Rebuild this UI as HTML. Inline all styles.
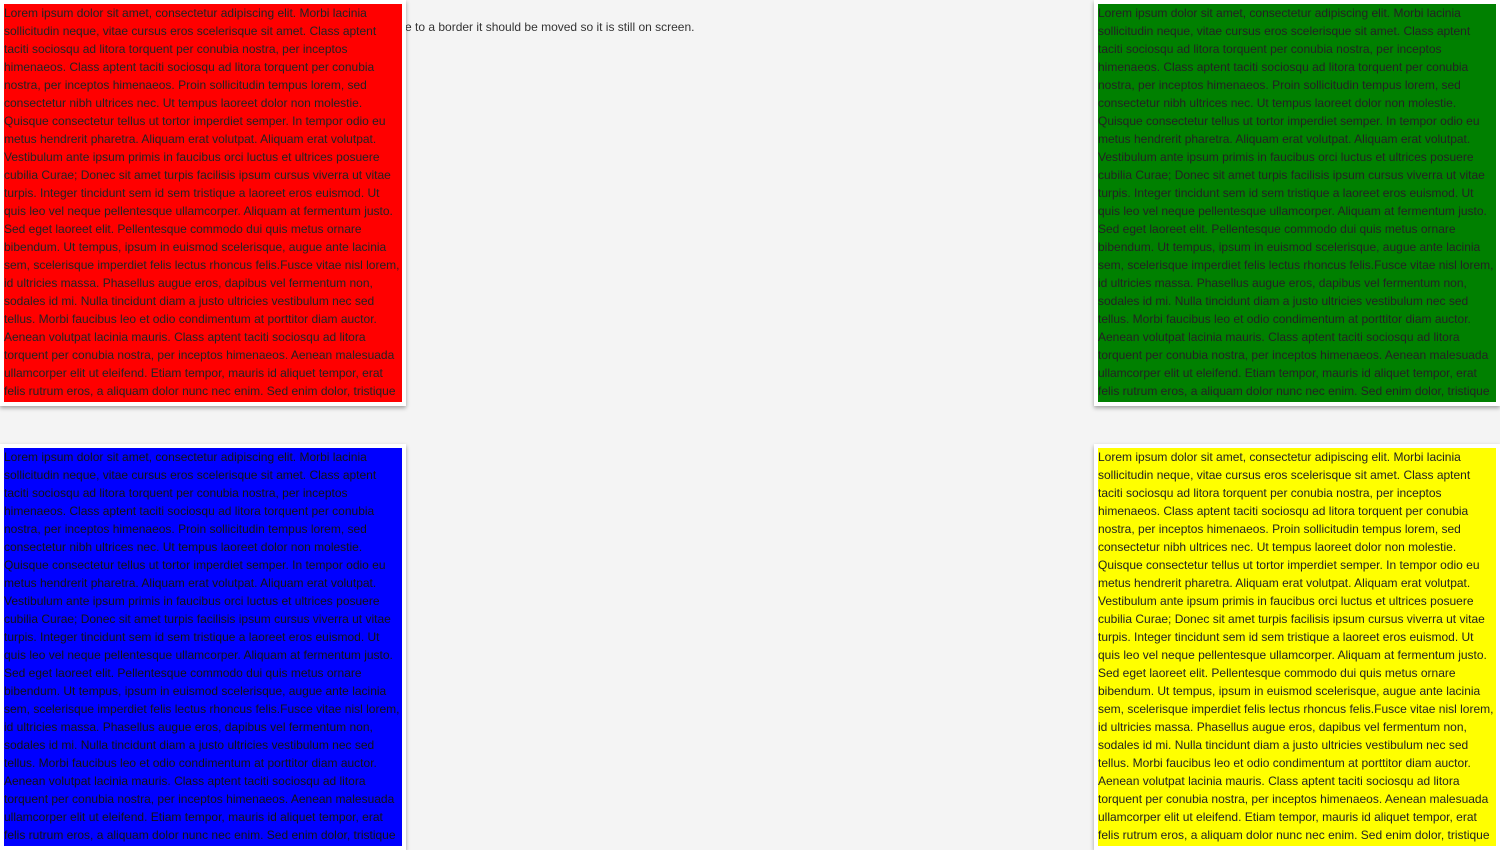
<!DOCTYPE html>
<html><head><meta charset="utf-8"><style>
html,body{margin:0;padding:0;background:#f4f4f4;width:1500px;height:850px;overflow:hidden;font-family:"Liberation Sans",Arial,sans-serif;}
.t{position:absolute;left:405px;top:20px;font-size:12px;color:#333;line-height:14px;white-space:nowrap}
.b{position:absolute;width:398px;height:398px;border:4px solid #fff;box-shadow:0 2px 4px rgba(0,0,0,.35);overflow:hidden;font-size:12px;line-height:18px;color:#222;}
.b div{white-space:nowrap}
</style></head><body>
<div class="t">e to a border it should be moved so it is still on screen.</div>
<div class="b" style="left:0;top:0;background:#f00">LINES</div>
<div class="b" style="left:1094px;top:0;background:#008000">LINES</div>
<div class="b" style="left:0;top:444px;background:#00f;color:#111">LINES</div>
<div class="b" style="left:1094px;top:444px;background:#ff0">LINES</div>
<script>
var L=["Lorem ipsum dolor sit amet, consectetur adipiscing elit. Morbi lacinia","sollicitudin neque, vitae cursus eros scelerisque sit amet. Class aptent","taciti sociosqu ad litora torquent per conubia nostra, per inceptos","himenaeos. Class aptent taciti sociosqu ad litora torquent per conubia","nostra, per inceptos himenaeos. Proin sollicitudin tempus lorem, sed","consectetur nibh ultrices nec. Ut tempus laoreet dolor non molestie.","Quisque consectetur tellus ut tortor imperdiet semper. In tempor odio eu","metus hendrerit pharetra. Aliquam erat volutpat. Aliquam erat volutpat.","Vestibulum ante ipsum primis in faucibus orci luctus et ultrices posuere","cubilia Curae; Donec sit amet turpis facilisis ipsum cursus viverra ut vitae","turpis. Integer tincidunt sem id sem tristique a laoreet eros euismod. Ut","quis leo vel neque pellentesque ullamcorper. Aliquam at fermentum justo.","Sed eget laoreet elit. Pellentesque commodo dui quis metus ornare","bibendum. Ut tempus, ipsum in euismod scelerisque, augue ante lacinia","sem, scelerisque imperdiet felis lectus rhoncus felis.Fusce vitae nisl lorem,","id ultricies massa. Phasellus augue eros, dapibus vel fermentum non,","sodales id mi. Nulla tincidunt diam a justo ultricies vestibulum nec sed","tellus. Morbi faucibus leo et odio condimentum at porttitor diam auctor.","Aenean volutpat lacinia mauris. Class aptent taciti sociosqu ad litora","torquent per conubia nostra, per inceptos himenaeos. Aenean malesuada","ullamcorper elit ut eleifend. Etiam tempor, mauris id aliquet tempor, erat","felis rutrum eros, a aliquam dolor nunc nec enim. Sed enim dolor, tristique","ut vestibulum at, egestas et nibh."];
var h=L.map(function(s){return "<div>"+s+"</div>"}).join("");
document.querySelectorAll(".b").forEach(function(e){e.innerHTML=h;});
</script>
</body></html>
